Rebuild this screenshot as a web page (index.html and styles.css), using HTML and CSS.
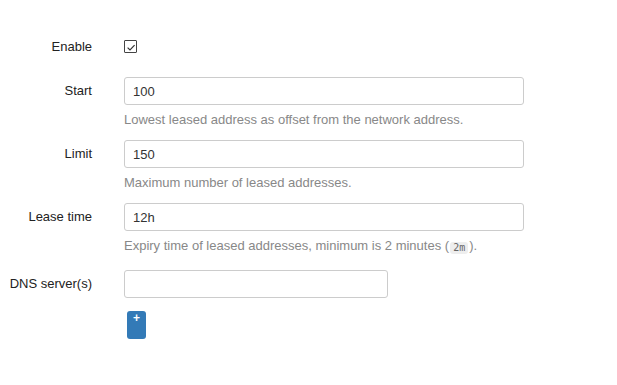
FILE: index.html
```html
<!DOCTYPE html>
<html lang="en">
<head>
  <meta charset="UTF-8" />
  <meta name="viewport" content="width=device-width, initial-scale=1" />
  <title>DHCP Server</title>
  <link rel="stylesheet" href="styles.css">
</head>
<body>

<div class="cbi-section">

  <div class="cbi-value cbi-value-check">
    <label class="cbi-value-title">Enable</label>
    <div class="cbi-value-field">
      <span class="checkbox">
        <svg width="11" height="11" viewBox="0 0 11 11">
          <path d="M2.6 6.6 L5 9 L9.6 4.2" fill="none" stroke="#333" stroke-width="1.2" />
        </svg>
      </span>
    </div>
  </div>

  <div class="cbi-value">
    <label class="cbi-value-title">Start</label>
    <div class="cbi-value-field">
      <input type="text" class="cbi-input" value="100" />
      <div class="cbi-value-description">Lowest leased address as offset from the network address.</div>
    </div>
  </div>

  <div class="cbi-value">
    <label class="cbi-value-title">Limit</label>
    <div class="cbi-value-field">
      <input type="text" class="cbi-input" value="150" />
      <div class="cbi-value-description">Maximum number of leased addresses.</div>
    </div>
  </div>

  <div class="cbi-value">
    <label class="cbi-value-title">Lease time</label>
    <div class="cbi-value-field">
      <input type="text" class="cbi-input" value="12h" />
      <div class="cbi-value-description">Expiry time of leased addresses, minimum is 2 minutes (<code>2m</code>).</div>
    </div>
  </div>

  <div class="cbi-value">
    <label class="cbi-value-title">DNS server(s)</label>
    <div class="cbi-value-field">
      <input type="text" class="cbi-input cbi-input-short" value="" />
      <div class="cbi-dynlist-add">
        <button class="cbi-button-add">+</button>
      </div>
    </div>
  </div>

</div>

</body>
</html>
```

FILE: styles.css
```css
body, html {
  margin: 0;
  padding: 0;
  background-color: #fff;
  font-family: "Liberation Sans", Arial, sans-serif;
  font-size: 13px;
  color: #333;
}

.cbi-section {
  padding-top: 37px;
}

.cbi-value {
  display: flex;
  gap: 32px;
  margin-bottom: 11px;
}

.cbi-value-check {
  margin-bottom: 21px;
}

.cbi-value-title {
  width: 92px;
  flex: 0 0 92px;
  text-align: right;
  line-height: 28px;
  color: #222;
}

.cbi-value-check .cbi-value-title {
  line-height: 19px;
}

.cbi-value-field {
  display: flex;
  flex-direction: column;
  align-items: flex-start;
}

.checkbox {
  display: block;
  width: 11px;
  height: 11px;
  margin-top: 3px;
  border: 1px solid #444;
  border-radius: 1px;
  background-color: #fff;
}

.checkbox svg {
  display: block;
}

.cbi-input {
  box-sizing: border-box;
  width: 400px;
  height: 28px;
  margin: 0;
  padding: 0 8px;
  border: 1px solid #ccc;
  border-radius: 3px;
  font-family: inherit;
  font-size: 13px;
  color: #333;
  outline: none;
}

.cbi-input-short {
  width: 264px;
}

.cbi-value-description {
  margin-top: 6px;
  line-height: 18px;
  color: #888;
}

.cbi-value-description code {
  display: inline-block;
  padding: 0 3px;
  margin: 0 1px 5px;
  line-height: 12px;
  border-radius: 3px;
  background-color: #eee;
  font-family: "DejaVu Sans Mono", monospace;
  font-size: 10px;
  color: #666;
  vertical-align: -1px;
}

.cbi-dynlist-add {
  margin-top: 13px;
  margin-left: 3px;
}

.cbi-button-add {
  display: block;
  box-sizing: border-box;
  width: 19px;
  height: 28px;
  padding: 0 0 14px;
  border: none;
  border-radius: 3px;
  background-color: #337ab7;
  color: #fff;
  font-family: inherit;
  font-size: 12px;
  font-weight: bold;
  line-height: 14px;
  text-align: center;
}
```
